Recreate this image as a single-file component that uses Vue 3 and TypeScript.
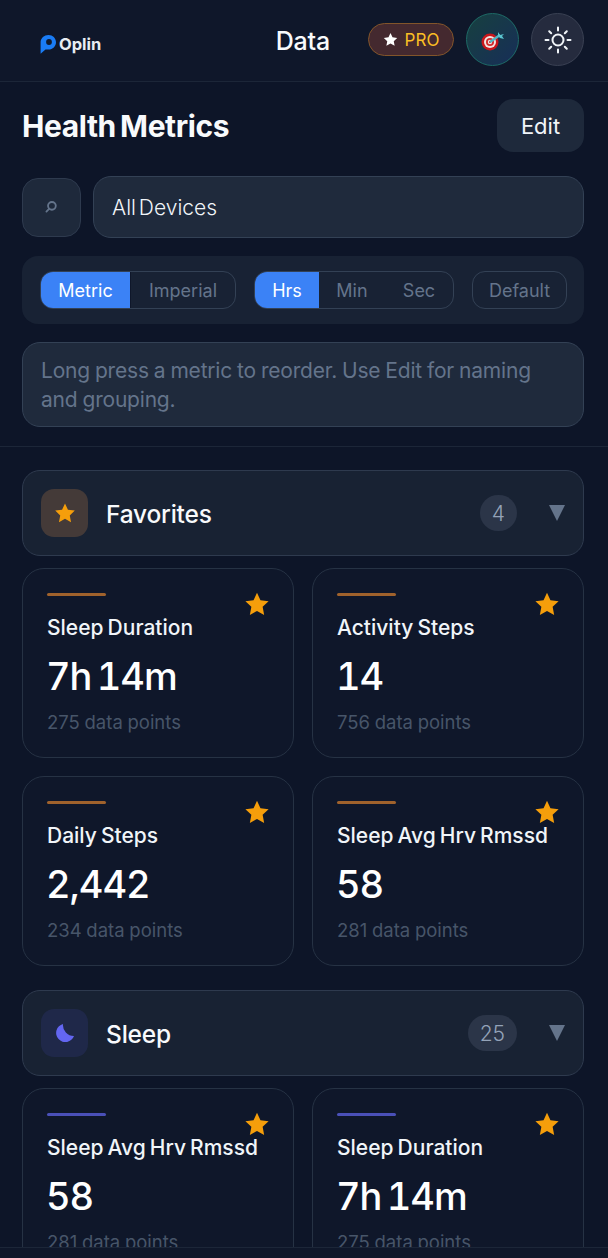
<script setup lang="ts">
interface Metric { name: string; value: string; points: string }
interface Group { name: string; count: string; kind: 'star' | 'moon'; accent: string; metrics: Metric[] }

const groups: Group[] = [
  {
    name: 'Favorites', count: '4', kind: 'star', accent: '#a0622c',
    metrics: [
      { name: 'Sleep Duration', value: '7h 14m', points: '275 data points' },
      { name: 'Activity Steps', value: '14', points: '756 data points' },
      { name: 'Daily Steps', value: '2,442', points: '234 data points' },
      { name: 'Sleep Avg Hrv Rmssd', value: '58', points: '281 data points' },
    ],
  },
  {
    name: 'Sleep', count: '25', kind: 'moon', accent: '#4a50b8',
    metrics: [
      { name: 'Sleep Avg Hrv Rmssd', value: '58', points: '281 data points' },
      { name: 'Sleep Duration', value: '7h 14m', points: '275 data points' },
    ],
  },
]
const starPath = 'M12 1.6l3.2 6.9 7.5.9-5.5 5.2 1.4 7.5L12 18.4l-6.6 3.7 1.4-7.5L1.3 9.4l7.5-.9z'
</script>

<template>
  <div class="page">
    <header class="topbar">
      <div class="logo">
        <svg class="logo-mark" viewBox="0 0 16 19" width="16" height="19">
          <path fill="#1a7cf5" d="M8.5 0C12.7 0 16 3.2 16 7.3s-3.300 7.300-7.500 7.300H5.500L.6 18.800V7.300C.6 3.200 4.200 0 8.500 0z" />
          <circle cx="9" cy="7" r="2.900" fill="#111a2c" />
        </svg>
        <span>Oplin</span>
      </div>
      <div class="top-title">Data</div>
      <div class="top-actions">
        <div class="pro">
          <svg viewBox="0 0 24 24" width="15" height="15"><path fill="#fff" :d="starPath" /></svg>
          <span>PRO</span>
        </div>
        <div class="round target">
          <svg viewBox="0 0 26 24" width="26" height="24">
            <circle cx="10" cy="14" r="8.500" fill="#c8161c" />
            <circle cx="10" cy="14" r="6" fill="#f2e4e2" />
            <circle cx="10" cy="14" r="4" fill="#d22a2c" />
            <circle cx="10" cy="14" r="2.200" fill="#f2e4e2" />
            <circle cx="10" cy="14" r="1" fill="#c8161c" />
            <path d="M10 14L20 7" stroke="#4fb6c4" stroke-width="2.400" />
            <path d="M18 4l2 3 4-1-2 2 2 3-4-1-2-2z" fill="#5ac4cf" />
          </svg>
        </div>
        <div class="round sun">
          <svg viewBox="0 0 28 28" width="28" height="28" fill="none" stroke="#f1f5f9" stroke-width="2" stroke-linecap="round">
            <circle cx="14" cy="14" r="5.500" />
            <path d="M14 1.500v3M14 23.500v3M1.500 14h3M23.500 14h3M5.200 5.200l2 2M20.800 20.800l2 2M5.200 22.800l2-2M20.800 7.200l2-2" />
          </svg>
        </div>
      </div>
    </header>

    <section class="controls">
      <div class="title-row">
        <h1>Health Metrics</h1>
        <button class="edit">Edit</button>
      </div>
      <div class="device-row">
        <div class="search">
          <svg viewBox="0 0 14 14" width="16" height="16" fill="none" stroke="#64748b" stroke-width="1.600" stroke-linecap="round">
            <circle cx="7.800" cy="6" r="3.400" />
            <path d="M5.300 8.600L3 11" />
          </svg>
        </div>
        <div class="devices">All Devices</div>
      </div>
      <div class="units">
        <div class="seg seg-units">
          <span class="on metric">Metric</span>
          <span class="imperial">Imperial</span>
        </div>
        <div class="seg seg-time">
          <span class="on hrs">Hrs</span>
          <span class="min">Min</span>
          <span class="sec">Sec</span>
        </div>
        <div class="default">Default</div>
      </div>
      <div class="hint">Long press a metric to reorder. Use Edit for naming and grouping.</div>
    </section>

    <main class="groups">
      <section v-for="g in groups" :key="g.name" class="group">
        <div class="group-head">
          <div class="group-icon" :class="g.kind">
            <svg v-if="g.kind === 'star'" viewBox="0 0 24 24" width="22" height="22"><path fill="#f59e0b" :d="starPath" /></svg>
            <svg v-else viewBox="0 0 24 24" width="24" height="24"><path fill="#6366f1" d="M10 3A9.200 9.200 0 1 0 21 15 11 11 0 0 1 10 3z" /></svg>
          </div>
          <div class="group-name">{{ g.name }}</div>
          <div class="count">{{ g.count }}</div>
          <div class="caret"></div>
        </div>
        <div class="cards">
          <article v-for="m in g.metrics" :key="m.name" class="card">
            <svg class="fav" viewBox="0 0 24 24" width="26" height="26"><path fill="#f59e0b" :d="starPath" /></svg>
            <div class="bar" :style="{ background: g.accent }"></div>
            <div class="m-name">{{ m.name }}</div>
            <div class="m-value">{{ m.value }}</div>
            <div class="m-points">{{ m.points }}</div>
          </article>
        </div>
      </section>
    </main>

    <div class="bottom"></div>
  </div>
</template>

<style>
html, body { margin: 0; background: #0d1528; }
</style>

<style scoped>
* { box-sizing: border-box; }
.page {
  position: relative;
  width: 608px;
  height: 1258px;
  overflow: hidden;
  background: #0d1528;
  color: #f8fafc;
  font-family: "Inter", "Noto Sans", sans-serif;
}
.topbar {
  height: 82px;
  display: flex;
  align-items: center;
  padding: 0 24px 2px 40px;
  background: #0f172a;
  border-bottom: 1px solid #1c2638;
}
.logo {
  width: 190px;
  display: flex;
  align-items: center;
  gap: 3px;
  font-size: 16.500px;
  font-weight: 700;
  color: #e8edf3;
  padding-top: 9px;
}
.logo-mark { flex: none; }
.top-title {
  width: 138px;
  font-size: 25px;
  font-weight: 500;
  text-align: center;
  margin-left: 4px;
  letter-spacing: -0.2px;
  padding: 2px 0 0 6px;
}
.top-actions {
  margin-left: auto;
  display: flex;
  align-items: center;
  gap: 12px;
}
.pro {
  width: 86px;
  height: 33px;
  border-radius: 17px;
  display: flex;
  align-items: center;
  justify-content: center;
  gap: 7px;
  background: #44292f;
  border: 1.500px solid #82552a;
  color: #fbbf24;
  font-size: 17px;
  font-weight: 400;
}
.round {
  width: 53px;
  height: 53px;
  border-radius: 50%;
  display: flex;
  align-items: center;
  justify-content: center;
}
.target {
  background: linear-gradient(135deg, #17403f, #172e58);
  border: 1.500px solid #1d6a66;
}
.sun {
  background: #252b3e;
  border: 1.500px solid #3a4153;
}
.controls {
  padding: 17px 24px 19px 22px;
  border-bottom: 1px solid #1c2638;
}
.title-row {
  display: flex;
  align-items: center;
  justify-content: space-between;
  height: 53px;
}
h1 {
  margin: 0;
  font-size: 30px;
  font-weight: 700;
  letter-spacing: -0.4px;
  word-spacing: -2.500px;
}
.edit {
  width: 87px;
  height: 53px;
  border: 0;
  border-radius: 16px;
  background: #1e293b;
  color: #f1f5f9;
  font: 400 22px "Inter", sans-serif;
}
.device-row {
  margin-top: 24px;
  display: flex;
  align-items: center;
  gap: 12px;
}
.search {
  width: 59px;
  height: 59px;
  border-radius: 16px;
  background: #1e293b;
  border: 1.500px solid #2e3a4e;
  display: flex;
  align-items: center;
  justify-content: center;
  padding-right: 1px;
}
.devices {
  flex: 1;
  height: 62px;
  padding-left: 18px;
  display: flex;
  align-items: center;
  border-radius: 18px;
  background: #1f2a3c;
  border: 1.500px solid #334155;
  font-size: 21px;
  font-weight: 300;
  color: #f1f5f9;
  word-spacing: -3px;
}
.units {
  margin-top: 18px;
  height: 68px;
  padding: 0 17px 0 18px;
  border-radius: 16px;
  background: #182234;
  display: flex;
  align-items: center;
}
.seg {
  height: 38px;
  border: 1.500px solid #334155;
  border-radius: 13px;
  display: flex;
  overflow: hidden;
  font-size: 18px;
  font-weight: 400;
  color: #64748b;
}
.seg span {
  display: flex;
  align-items: center;
  justify-content: center;
}
.seg .on {
  background: #3b82f6;
  color: #fff;
  font-weight: 400;
}
.seg-units { width: 196px; }
.metric { width: 89px; }
.imperial { flex: 1; border-left: 1px solid #0f172a; }
.seg-time { width: 200px; margin-left: 18px; }
.hrs { width: 64px; }
.min { width: 66px; }
.sec { flex: 1; }
.default {
  margin-left: 18px;
  width: 95px;
  height: 38px;
  border: 1.500px solid #334155;
  border-radius: 13px;
  display: flex;
  align-items: center;
  justify-content: center;
  font-size: 18px;
  color: #64748b;
}
.hint {
  margin-top: 18px;
  height: 85px;
  padding: 13px 18px;
  border-radius: 18px;
  background: #1f2a3c;
  border: 1.500px solid #334155;
  color: #64748b;
  font-size: 21px;
  line-height: 29px;
  letter-spacing: -0.2px;
  word-spacing: -0.700px;
}
.groups {
  padding: 23px 24px 0 22px;
  display: flex;
  flex-direction: column;
  gap: 24px;
}
.group-head {
  height: 86px;
  padding: 0 18px 0 18px;
  display: flex;
  align-items: center;
  border-radius: 18px;
  background: #182233;
  border: 1.500px solid #2e3a4e;
}
.group-icon {
  width: 47px;
  height: 48px;
  border-radius: 13px;
  display: flex;
  align-items: center;
  justify-content: center;
}
.group-icon.star { background: #443a38; }
.group-icon.moon { background: #1f2849; }
.group-name {
  margin-left: 18px;
  flex: 1;
  padding-top: 1px;
  font-size: 24.500px;
  font-weight: 500;
  letter-spacing: -0.2px;
}
.count {
  min-width: 37px;
  height: 36px;
  padding: 0 12px;
  border-radius: 18px;
  background: #2b3548;
  color: #94a3b8;
  font-size: 21px;
  font-weight: 300;
  display: flex;
  align-items: center;
  justify-content: center;
}
.caret {
  margin-left: 32px;
  width: 0;
  height: 0;
  border-left: 8px solid transparent;
  border-right: 8px solid transparent;
  border-top: 16px solid #64748b;
}
.cards {
  margin-top: 12px;
  display: grid;
  grid-template-columns: 1fr 1fr;
  gap: 18px;
}
.card {
  position: relative;
  height: 190px;
  padding: 24px 24px 0 24px;
  border-radius: 22px;
  background: #0f172a;
  border: 1.500px solid #263244;
}
.fav {
  position: absolute;
  top: 22px;
  right: 23px;
}
.bar {
  width: 59px;
  height: 3px;
  border-radius: 2px;
}
.m-name {
  margin-top: 19px;
  font-size: 21px;
  font-weight: 500;
  white-space: nowrap;
  word-spacing: -1.500px;
  color: #f1f5f9;
}
.m-value {
  margin: 13px 0 0 -1px;
  font-size: 38px;
  font-weight: 500;
  line-height: 46px;
  color: #fff;
  font-variant-numeric: tabular-nums;
  letter-spacing: -1px;
  word-spacing: -4px;
}
.m-points {
  margin-top: 12px;
  font-size: 18.500px;
  color: #475569;
  word-spacing: -0.500px;
}
.bottom {
  position: absolute;
  left: 0;
  right: 0;
  bottom: 0;
  height: 11px;
  background: #0f172a;
  border-top: 1px solid #1c2638;
}
</style>
